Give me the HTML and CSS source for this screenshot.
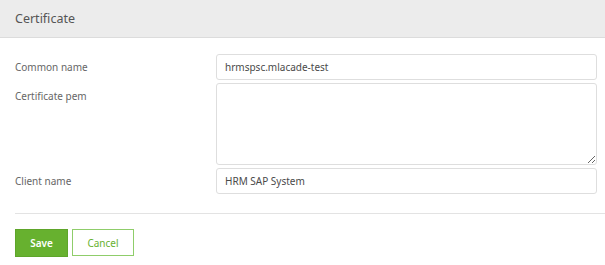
FILE: index.html
```html
<!DOCTYPE html>
<html lang="en">
<head>
  <meta charset="UTF-8" />
  <title>Certificate</title>
  <link rel="stylesheet" href="styles.css">
</head>
<body>
  <div class="panel">
    <div class="panel-head">Certificate</div>

    <form class="cert-form">
      <div class="field">
        <label class="field-label">Common name</label>
        <input class="field-input" type="text" value="hrmspsc.mlacade-test">
      </div>
      <div class="field">
        <label class="field-label">Certificate pem</label>
        <textarea class="field-input field-area"></textarea>
      </div>
      <div class="field">
        <label class="field-label">Client name</label>
        <input class="field-input" type="text" value="HRM SAP System">
      </div>
    </form>

    <div class="divider"></div>

    <div class="actions">
      <button class="btn btn-save" type="button">Save</button>
      <button class="btn btn-cancel" type="button">Cancel</button>
    </div>
  </div>
</body>
</html>
```

FILE: styles.css
```css
* {
  box-sizing: border-box;
  font-family: 'Noto Sans', 'Open Sans', sans-serif;
}

html, body {
  margin: 0;
  padding: 0;
  background-color: #fff;
  color: #555;
}

.panel-head {
  height: 38px;
  padding: 0 15px;
  display: flex;
  align-items: center;
  background-color: #ececec;
  border-bottom: 1px solid #dcdcdc;
  font-size: 12.5px;
  color: #555;
}

.cert-form {
  padding: 16px 8px 0 15px;
  display: flex;
  flex-direction: column;
  gap: 3px;
}

.field {
  display: grid;
  grid-template-columns: 201px 1fr;
  align-items: start;
}

.field-label {
  font-size: 10px;
  color: #666;
  padding-top: 6px;
  line-height: 14px;
}

.field-input {
  height: 26px;
  border: 1px solid #dedede;
  border-radius: 3px;
  padding: 0 8px;
  font-size: 10px;
  color: #4a4a4a;
  outline: none;
}

.field-area {
  height: 82px;
  resize: vertical;
  padding: 6px 8px;
}

.divider {
  margin: 19px 0 0 15px;
  border-top: 1px solid #e3e3e3;
}

.actions {
  padding: 15px 15px 0;
  display: flex;
  gap: 4px;
}

.btn {
  height: 28px;
  font-size: 10px;
  border-radius: 0;
  cursor: pointer;
}

.btn-save {
  width: 53px;
  background-color: #67b12f;
  border: 1px solid #5ea52a;
  color: #fff;
  font-weight: 600;
}

.btn-cancel {
  width: 62px;
  height: 27px;
  background-color: #fff;
  border: 1px solid #8fcd6a;
  color: #67b12f;
}
```
